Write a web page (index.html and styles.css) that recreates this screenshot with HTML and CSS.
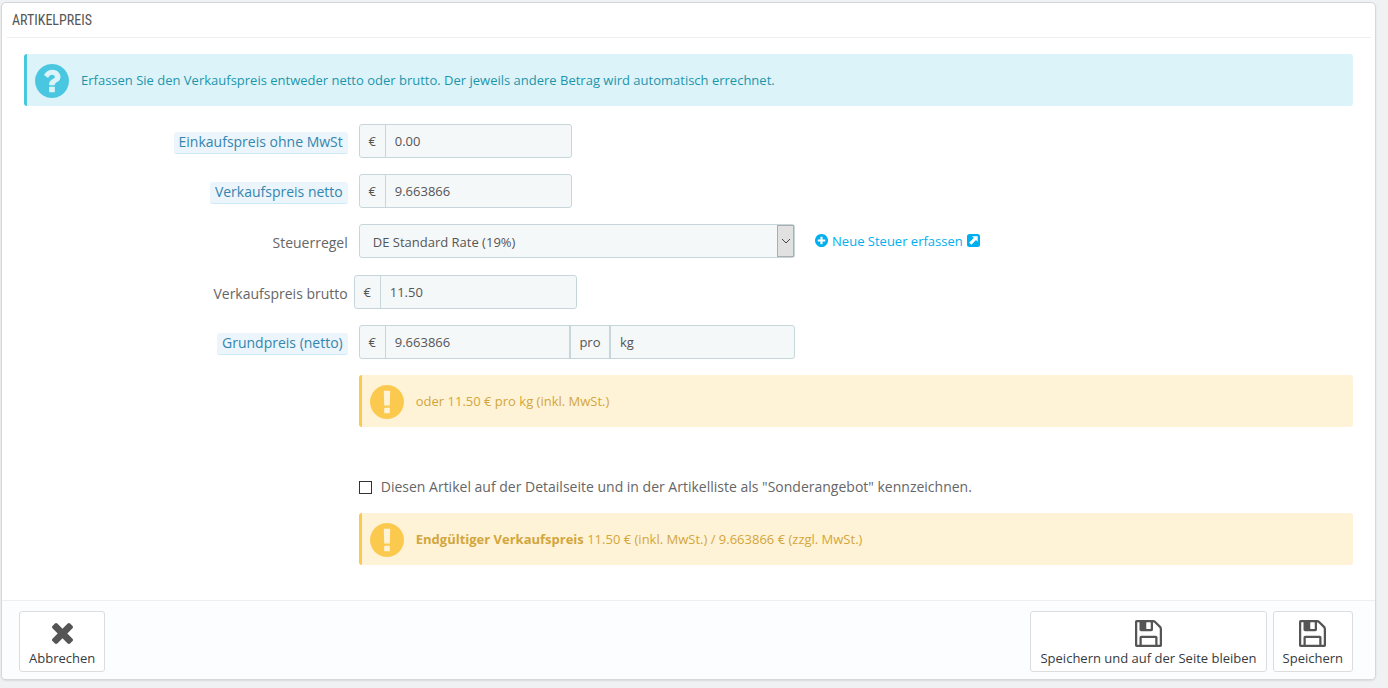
FILE: index.html
```html
<!DOCTYPE html>
<html lang="de">
<head>
<meta charset="utf-8">
<title>Artikelpreis</title>
<link rel="stylesheet" href="styles.css">
</head>
<body>
<svg class="sprite" aria-hidden="true">
  <symbol id="question" viewBox="128 128 1536 1536"><path d="M1024 1376v-192q0-14-9-23t-23-9h-192q-14 0-23 9t-9 23v192q0 14 9 23t23 9h192q14 0 23-9t9-23zm256-672q0-88-55.500-163t-138.500-116-170-41q-243 0-371 213-15 24 8 42l132 100q7 6 19 6 16 0 25-12 53-68 86-92 34-24 86-24 48 0 85.500 26t37.500 59q0 38-20 61t-68 45q-63 28-115.500 86.500t-52.500 125.500v36q0 14 9 23t23 9h192q14 0 23-9t9-23q0-19 21.500-49.500t54.500-49.500q32-18 49-28.500t46-35 44.500-48 28-60.500 12.500-81zm384 192q0 209-103 385.500t-279.500 279.500-385.500 103-385.500-103-279.500-279.500-103-385.500 103-385.500 279.500-279.500 385.500-103 385.500 103 279.500 279.500 103 385.500z"/></symbol>
  <symbol id="exclamation" viewBox="128 128 1536 1536"><path d="M896 128q209 0 385.500 103t279.500 279.500 103 385.500-103 385.500-279.500 279.500-385.500 103-385.500-103-279.500-279.500-103-385.500 103-385.500 279.500-279.500 385.500-103zm128 1247v-190q0-14-9-23.500t-22-9.500h-192q-13 0-23 10t-10 23v190q0 13 10 23t23 10h192q13 0 22-9.500t9-23.500zm-2-344l18-621q0-12-10-18-10-8-24-8h-220q-14 0-24 8-10 6-10 18l17 621q0 10 10 17.500t24 7.500h185q14 0 23.500-7.500t10.500-17.500z"/></symbol>
  <symbol id="plus" viewBox="128 128 1536 1536"><path d="M1344 960v-128q0-26-19-45t-45-19h-256v-256q0-26-19-45t-45-19h-128q-26 0-45 19t-19 45v256h-256q-26 0-45 19t-19 45v128q0 26 19 45t45 19h256v256q0 26 19 45t45 19h128q26 0 45-19t19-45v-256h256q26 0 45-19t19-45zm320-64q0 209-103 385.500t-279.500 279.500-385.500 103-385.500-103-279.500-279.500-103-385.500 103-385.500 279.500-279.500 385.500-103 385.500 103 279.500 279.500 103 385.500z"/></symbol>
  <symbol id="external" viewBox="0 0 13 13"><path fill-rule="evenodd" d="M2.500 0h8A2.500 2.500 0 0 1 13 2.500v8a2.500 2.500 0 0 1-2.500 2.500h-8A2.500 2.500 0 0 1 0 10.500v-8A2.500 2.500 0 0 1 2.500 0zM5.200 2.300 6.800 3.900 2.200 8.500 4.400 10.700 9 6.100 10.700 7.800V2.300z"/></symbol>
  <symbol id="times" viewBox="302 366 1188 1188"><path d="M1490 1322q0 40-28 68l-136 136q-28 28-68 28t-68-28l-294-294-294 294q-28 28-68 28t-68-28l-136-136q-28-28-28-68t28-68l294-294-294-294q-28-28-28-68t28-68l136-136q28-28 68-28t68 28l294 294 294-294q28-28 68-28t68 28l136 136q28 28 28 68t-28 68l-294 294 294 294q28 28 28 68z"/></symbol>
  <symbol id="floppy" viewBox="128 128 1536 1536"><path d="M512 1536h768v-384h-768v384zm896 0h128v-896q0-14-10-38.500t-20-34.500l-281-281q-10-10-34-20t-39-10v416q0 40-28 68t-68 28h-576q-40 0-68-28t-28-68v-416h-128v1280h128v-416q0-40 28-68t68-28h832q40 0 68 28t28 68v416zm-384-928v-320q0-13-9.500-22.500t-22.500-9.500h-192q-13 0-22.500 9.500t-9.500 22.500v320q0 13 9.500 22.500t22.500 9.500h192q13 0 22.500-9.500t9.500-22.500zm640 32v928q0 40-28 68t-68 28h-1344q-40 0-68-28t-28-68v-1344q0-40 28-68t68-28h928q40 0 88 20t76 48l280 280q28 28 48 76t20 88z"/></symbol>
</svg>
<form class="panel">
  <h1 class="panel-heading">ARTIKELPREIS</h1>
  <div class="panel-body">
    <div class="alert alert-info">
      <svg class="alert-icon" aria-hidden="true"><use href="#question"/></svg>
      <p>Erfassen Sie den Verkaufspreis entweder netto oder brutto. Der jeweils andere Betrag wird automatisch errechnet.</p>
    </div>
    <div class="rows">
      <div class="row">
        <label class="label" for="wholesale"><span class="hint">Einkaufspreis ohne MwSt</span></label>
        <div class="fields">
          <div class="cell span-2"><div class="group"><span class="addon">€</span><input class="control" id="wholesale" type="text" value="0.00"></div></div>
        </div>
      </div>
      <div class="row">
        <label class="label" for="net"><span class="hint">Verkaufspreis netto</span></label>
        <div class="fields">
          <div class="cell span-2"><div class="group"><span class="addon">€</span><input class="control" id="net" type="text" value="9.663866"></div></div>
        </div>
      </div>
      <div class="row">
        <label class="label" for="tax">Steuerregel</label>
        <div class="fields">
          <div class="cell span-4">
            <div class="select">
              <select id="tax"><option>DE Standard Rate (19%)</option></select>
              <span class="select-arrow"><svg viewBox="0 0 10 6" aria-hidden="true"><path d="M1 1l4 4 4-4"/></svg></span>
            </div>
          </div>
          <div class="cell span-4 link-cell">
            <a class="link" href="#"><svg class="link-icon" aria-hidden="true"><use href="#plus"/></svg>Neue Steuer erfassen<svg class="link-icon" aria-hidden="true"><use href="#external"/></svg></a>
          </div>
        </div>
      </div>
      <div class="row">
        <label class="label" for="gross">Verkaufspreis brutto</label>
        <div class="fields">
          <div class="cell span-2 flush"><div class="group"><span class="addon">€</span><input class="control" id="gross" type="text" value="11.50"></div></div>
        </div>
      </div>
      <div class="row">
        <label class="label" for="unit-price"><span class="hint">Grundpreis (netto)</span></label>
        <div class="fields">
          <div class="cell span-4"><div class="group"><span class="addon">€</span><input class="control" id="unit-price" type="text" value="9.663866"><span class="addon addon-mid">pro</span><input class="control" type="text" value="kg" aria-label="Einheit"></div></div>
        </div>
      </div>
      <div class="row">
        <div class="wide">
          <div class="alert alert-warning">
            <svg class="alert-icon" aria-hidden="true"><use href="#exclamation"/></svg>
            <p>oder 11.50 € pro kg (inkl. MwSt.)</p>
          </div>
        </div>
      </div>
      <div class="row row-check">
        <div class="wide">
          <label class="check"><input type="checkbox">Diesen Artikel auf der Detailseite und in der Artikelliste als "Sonderangebot" kennzeichnen.</label>
        </div>
      </div>
      <div class="row">
        <div class="wide">
          <div class="alert alert-warning">
            <svg class="alert-icon" aria-hidden="true"><use href="#exclamation"/></svg>
            <p><strong>Endgültiger Verkaufspreis</strong> 11.50 € (inkl. MwSt.) / 9.663866 € (zzgl. MwSt.)</p>
          </div>
        </div>
      </div>
    </div>
  </div>
  <footer class="panel-footer">
    <button class="button" type="button"><span class="button-icon"><svg class="icon-times" aria-hidden="true"><use href="#times"/></svg></span>Abbrechen</button>
    <div class="actions">
      <button class="button" type="submit"><span class="button-icon"><svg class="icon-floppy" aria-hidden="true"><use href="#floppy"/></svg></span>Speichern und auf der Seite bleiben</button>
      <button class="button" type="submit"><span class="button-icon"><svg class="icon-floppy" aria-hidden="true"><use href="#floppy"/></svg></span>Speichern</button>
    </div>
  </footer>
</form>
</body>
</html>
```
FILE: styles.css
```css
* { box-sizing: border-box; }

body {
  margin: 0;
  padding: 2px 12px 8px 1px;
  background: #eff1f2;
  color: #555;
  font: 13px/18px "Open Sans", "Noto Sans", sans-serif;
}

p { margin: 0; }
svg { display: block; fill: currentColor; }
.sprite { display: none; }

.panel {
  border: 1px solid #d3d8db;
  border-radius: 5px;
  background: #fff;
  box-shadow: 0 1px 2px rgba(0, 0, 0, 0.1);
  overflow: hidden;
}

.panel-heading {
  margin: 0 4px 0 5px;
  padding: 0 5px;
  border-bottom: 1px solid #eee;
  font: 14px/35px "Roboto Condensed", Roboto, sans-serif;
  height: 35px;
}

.panel-body { padding: 16px 22px 35px; }

.alert {
  display: flex;
  align-items: flex-start;
  gap: 12px;
  min-height: 52px;
  padding: 10px 8px 8px;
  border-left: 3px solid;
  border-radius: 3px;
  line-height: 32px;
}
.alert-icon { flex: none; width: 34px; height: 34px; }
.alert-info { border-color: #4ac7e0; background: #dcf4f9; color: #1e94ab; }
.alert-info .alert-icon { color: #4ac7e0; }
.alert-warning { border-color: #fcc94f; background: #fff3d7; color: #d2a63c; }
.alert-warning .alert-icon { color: #fcc94f; }

.rows {
  display: flex;
  flex-direction: column;
  gap: 16px;
  margin: 18px -5px 0;
}
.row { display: grid; grid-template-columns: 1fr 3fr; }
.row-check { padding-top: 34px; }

.label {
  justify-self: end;
  align-self: center;
  padding: 3px 6px 0 0;
  color: #666;
  font-size: 14px;
  line-height: 20px;
}
.hint {
  display: block;
  padding: 0 5px 1px;
  border-bottom: 1px solid #cdeaf7;
  border-radius: 3px;
  background: #ebf5fb;
  color: #3586ae;
}

.fields { display: grid; grid-template-columns: repeat(9, 1fr); }
.cell { padding: 0 5px; min-width: 0; }
.span-2 { grid-column: span 2; }
.span-4 { grid-column: span 4; }
.flush { padding: 0; }
.wide { grid-column: 2; padding: 0 5px; }

.group {
  display: flex;
  height: 34px;
  border: 1px solid #c7d6db;
  border-radius: 3px;
  background: #f5f8f9;
  overflow: hidden;
}
.addon {
  flex: none;
  width: 26px;
  border-right: 1px solid #c7d6db;
  text-align: center;
  line-height: 32px;
}
.addon-mid { width: 42px; border: solid #c7d6db; border-width: 0 2px; }
.control {
  flex: 1 1 0;
  min-width: 0;
  width: 0;
  padding: 0 9px;
  border: 0;
  background: transparent;
  color: #555;
  font: inherit;
}

.select { position: relative; padding-bottom: 1px; }
.select select {
  display: block;
  width: 100%;
  height: 34px;
  padding: 2px 24px 0 13px;
  border: 1px solid #c7d6db;
  border-radius: 3px;
  background: #f5f8f9;
  color: #555;
  font: inherit;
  appearance: none;
}
.select-arrow {
  position: absolute;
  top: 1px;
  right: 1px;
  width: 17px;
  height: 32px;
  display: grid;
  place-items: center;
  border: 1px solid #adadad;
  background: #e1e1e1;
  pointer-events: none;
}
.select-arrow svg { width: 10px; height: 6px; fill: none; stroke: #444; }

.link-cell { display: flex; align-items: center; padding: 0 5px 2px 15px; }
.link {
  display: flex;
  align-items: center;
  gap: 4px;
  color: #00aff0;
  text-decoration: none;
}
.link-icon { width: 13px; height: 13px; }

.check {
  display: flex;
  align-items: center;
  gap: 9px;
  color: #666;
  font-size: 14px;
  line-height: 20px;
}
.check input {
  appearance: none;
  width: 13px;
  height: 13px;
  margin: 0;
  border: 1px solid #333;
  background: #fff;
}
.check input:checked { background: #333; box-shadow: inset 0 0 0 2px #fff; }

.panel-footer {
  display: flex;
  justify-content: space-between;
  padding: 10px 22px 7px 17px;
  border-top: 1px solid #eee;
  background: #fcfdfe;
}
.actions { display: flex; gap: 6px; }
.button {
  padding: 6px 9px 4px;
  border: 1px solid #ddd;
  border-radius: 3px;
  background: #fff;
  color: #363a41;
  font: inherit;
}
.button-icon {
  display: grid;
  place-items: center;
  height: 31px;
  color: #555;
}
.icon-times { width: 21px; height: 21px; }
.icon-floppy { width: 27px; height: 27px; }
```
